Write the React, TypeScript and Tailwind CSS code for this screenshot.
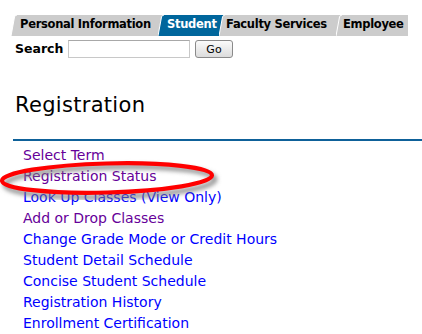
const tabs = [
  { label: "Personal Information", w: "w-[147px]", active: false },
  { label: "Student", w: "w-[61px]", active: true },
  { label: "Faculty Services", w: "w-[117px]", active: false },
  { label: "Employee", w: "w-[72px]", active: false },
];

const links = [
  { label: "Select Term", visited: true },
  { label: "Registration Status", visited: true },
  { label: "Look Up Classes (View Only)", visited: false },
  { label: "Add or Drop Classes", visited: true },
  { label: "Change Grade Mode or Credit Hours", visited: false },
  { label: "Student Detail Schedule", visited: false },
  { label: "Concise Student Schedule", visited: false },
  { label: "Registration History", visited: false },
  { label: "Enrollment Certification", visited: false },
];

function TabEdge({ prev, color }: { prev: string; color: string }) {
  return (
    <svg width="6" height="21" viewBox="0 0 6 21" className="block shrink-0">
      <rect x="0" y="0" width="6" height="21" fill={prev} />
      <path d="M0 21 L3.5 2 Q4 0 6 0 L6 21 Z" fill={color} />
      <path d="M0 21 L3.5 2 Q4 0 6 0" fill="none" stroke="#ffffff" strokeWidth="1" />
    </svg>
  );
}

function Ellipse() {
  return (
    <svg
      width="224"
      height="44"
      viewBox="0 0 224 44"
      className="absolute left-0 top-[156px] pointer-events-none"
    >
      <defs>
        <filter id="soft" x="-10%" y="-50%" width="120%" height="200%">
          <feGaussianBlur stdDeviation="2" />
        </filter>
      </defs>
      <ellipse
        cx="110"
        cy="26"
        rx="105"
        ry="15"
        transform="rotate(-1.5 110 26)"
        fill="none"
        stroke="#7a7a7a"
        strokeOpacity="0.8"
        strokeWidth="5"
        filter="url(#soft)"
      />
      <ellipse
        cx="107"
        cy="22"
        rx="105"
        ry="14.5"
        transform="rotate(-1.5 107 22)"
        fill="none"
        stroke="#ff0000"
        strokeWidth="4.2"
      />
    </svg>
  );
}

export default function App() {
  return (
    <div className="relative w-[422px] h-[334px] overflow-hidden bg-white font-['DejaVu_Sans',Verdana,sans-serif] text-black">
      <div className="flex pt-[15px] pl-[11px]">
        {tabs.map((t, i) => {
          const color = t.active ? "#00669c" : "#cccccc";
          const prev = i === 0 ? "#ffffff" : tabs[i - 1].active ? "#00669c" : "#cccccc";
          return (
            <div key={t.label} className={`flex h-[21px] ${t.w}`}>
              <TabEdge prev={prev} color={color} />
              <div
                className={`flex-1 h-full ${t.active ? "bg-[#00669c] text-white" : "bg-[#cccccc] text-black"} text-[11.5px] tracking-[-0.3px] leading-[14px] font-bold pt-[2px] whitespace-nowrap overflow-hidden`}
              >
                <span className={i === 0 || t.active ? "pl-[3px]" : "pl-[1px]"}>{t.label}</span>
              </div>
            </div>
          );
        })}
      </div>

      <div className="flex items-center pl-[15px] pt-[3px] h-[21px] mt-[1px]">
        <span className="text-[12.5px] font-bold w-[53px]">Search</span>
        <input
          type="text"
          className="w-[122px] h-[18px] border border-[#c8c8c8] border-t-[#a8a8a8] bg-white outline-none"
        />
        <button className="ml-[5px] w-[38px] h-[18px] rounded-[3px] border border-[#8a8a8a] bg-gradient-to-b from-[#fbfbfb] to-[#dcdcdc] text-[11px] leading-none text-black">
          Go
        </button>
      </div>

      <h1 className="mt-[35px] pl-[15px] text-[21px] tracking-[0.3px] leading-[25px] font-normal">Registration</h1>

      <div className="ml-[13px] mt-[21px] h-[2px] bg-[#0e6199]" />

      <ul className="pl-[23px] mt-[4px]">
        {links.map((l) => (
          <li key={l.label} className="text-[14px] leading-[21px]">
            <a href="#" className={l.visited ? "text-[#660099]" : "text-[#0000ff]"}>
              {l.label}
            </a>
          </li>
        ))}
      </ul>

      <Ellipse />
    </div>
  );
}
